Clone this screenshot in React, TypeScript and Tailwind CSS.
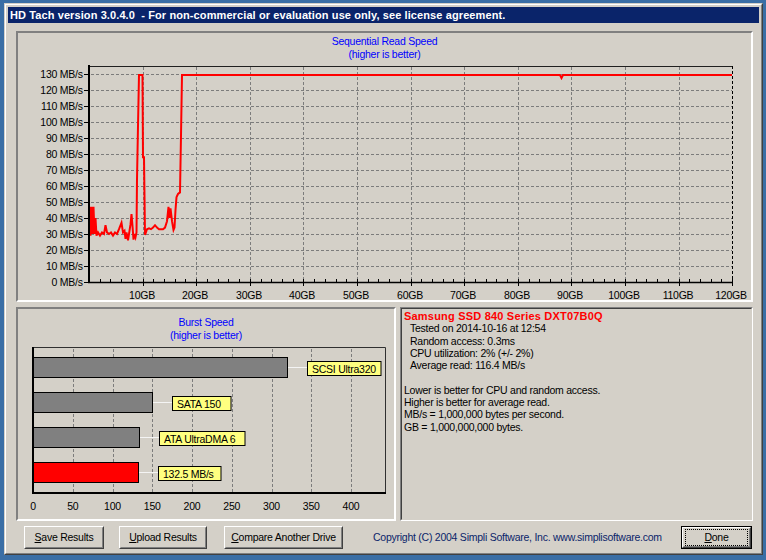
import React from "react";

const SVGFONT = '"Liberation Sans", Arial, sans-serif';

const redPts: [number, number][] = [
  [89.5, 47], [90.5, 29], [91.5, 47], [92.5, 30], [93.5, 47], [94.5, 30], [95.5, 40], [96.5, 29],
  [98, 31], [100, 29], [102, 31], [104, 30], [105.5, 35.5], [107, 31], [109, 30], [111, 31],
  [113, 29], [115, 31], [117, 30], [119, 33], [121.5, 37], [123, 31], [124.5, 32], [125.5, 27],
  [126.5, 31], [128, 26], [129, 30], [130.5, 36], [131.5, 42.5], [132.5, 35], [133.5, 26.5],
  [134.5, 30], [135.5, 28], [136.5, 31], [137, 64], [138, 97.5], [139, 129.4], [142.5, 129.4],
  [143, 78], [144, 78], [145, 29.5], [147, 33], [149, 33.5], [151, 33], [153, 34], [155, 35.5],
  [157, 34], [159, 33], [161, 33], [163, 33], [165, 34], [167, 38], [168.5, 47], [169.5, 40],
  [170.5, 46], [172, 38], [173.5, 32.5], [174.5, 34], [175.5, 45], [176.5, 53], [178, 55],
  [180, 56], [181, 91.7], [182, 129.4], [560, 129.4], [561.5, 127.5], [563, 129.4], [732, 129.4],
];

const GRID = "#7c7c7c";

function SeqChart() {
  const y0 = 282;
  const yv = (v: number) => y0 - v * 1.6;
  const x0 = 89;
  const gx = (k: number) => Math.round(x0 + 53.6 * k) + 0.5;
  const right = 732.5;
  const ys = Array.from({ length: 14 }, (_, i) => i);
  const xs = Array.from({ length: 12 }, (_, i) => i + 1);
  const minors = Array.from({ length: 60 }, (_, i) => i + 1).filter((i) => i % 5 !== 0);
  return (
    <svg width={733} height={239} viewBox="18 61 733 239" className="block">
      {ys.slice(1).map((k) => (
        <line key={"h" + k} x1={91} x2={732} y1={282.5 - 16 * k} y2={282.5 - 16 * k} stroke={GRID} strokeDasharray="3 2" />
      ))}
      {xs.slice(0, 11).map((k) => (
        <line key={"v" + k} x1={gx(k)} x2={gx(k)} y1={67} y2={281} stroke={GRID} strokeDasharray="3 2" />
      ))}
      <line x1={x0} x2={right} y1={66.5} y2={66.5} stroke="#202020" />
      <line x1={right} x2={right} y1={66} y2={282} stroke="#000" strokeDasharray="3 2" />
      {minors.map((m) => (
        <line key={"m" + m} x1={Math.round(x0 + 10.72 * m) + 0.5} x2={Math.round(x0 + 10.72 * m) + 0.5} y1={279} y2={282} stroke="#000" />
      ))}
      {xs.map((k) => (
        <line key={"t" + k} x1={gx(k)} x2={gx(k)} y1={279} y2={286} stroke="#000" />
      ))}
      {ys.map((k) => (
        <line key={"yt" + k} x1={84} x2={89} y1={282.5 - 16 * k} y2={282.5 - 16 * k} stroke="#000" />
      ))}
      <polyline
        points={redPts.map(([x, v]) => `${x},${yv(v)}`).join(" ")}
        fill="none"
        stroke="#ff0000"
        strokeWidth={2}
        strokeLinejoin="miter"
      />
      <line x1={89} x2={89} y1={65} y2={283} stroke="#000" strokeWidth={2} />
      <line x1={88} x2={733} y1={282.5} y2={282.5} stroke="#000" strokeWidth={1.5} />
      <g fontFamily={SVGFONT} fontSize={10.5} letterSpacing={-0.25} fill="#000">
        {ys.map((k) => (
          <text key={"yl" + k} x={82.7} y={286 - 16 * k} textAnchor="end">
            {k * 10} MB/s
          </text>
        ))}
        {xs.map((k) => (
          <text key={"xl" + k} x={gx(k) - 1.5} y={298.5} textAnchor="middle">
            {k * 10}GB
          </text>
        ))}
      </g>
    </svg>
  );
}

const bars = [
  { v: 320, top: 357, fill: "#808080", label: "SCSI Ultra320", w: 73.5 },
  { v: 150, top: 392, fill: "#808080", label: "SATA 150", w: 58.5 },
  { v: 133, top: 427, fill: "#808080", label: "ATA UltraDMA 6", w: 85.5 },
  { v: 132.5, top: 462, fill: "#ff0000", label: "132.5 MB/s", w: 62.5 },
];

function BurstChart() {
  const x0 = 33;
  const sx = (v: number) => x0 + v * 0.795;
  const ticks = [0, 50, 100, 150, 200, 250, 300, 350, 400];
  return (
    <svg width={376} height={177} viewBox="18 342 376 177" className="block">
      {ticks.slice(1).map((t) => (
        <line key={"g" + t} x1={Math.round(sx(t)) + 0.5} x2={Math.round(sx(t)) + 0.5} y1={349} y2={492} stroke={GRID} strokeDasharray="3 2" />
      ))}
      <line x1={33} x2={385.5} y1={347.5} y2={347.5} stroke="#303030" />
      <line x1={385.5} x2={385.5} y1={347.5} y2={493} stroke="#303030" />
      {bars.map((b) => {
        const end = Math.round(sx(b.v)) + 0.5;
        const lx = Math.round(end + 19) + 0.5;
        return (
          <g key={b.label}>
            <line x1={end} x2={lx} y1={b.top + 10.5} y2={b.top + 10.5} stroke="#f4f4f4" />
            <rect x={33} y={b.top + 0.5} width={end - 33} height={20} fill={b.fill} stroke="#000" />
            <rect x={lx} y={b.top + 4.5} width={b.w} height={14} fill="#ffff80" stroke="#000" />
            <text x={lx + 4.5} y={b.top + 15.5} fontFamily={SVGFONT} fontSize={10.5} letterSpacing={-0.25} fill="#000">
              {b.label}
            </text>
          </g>
        );
      })}
      <line x1={33} x2={33} y1={347} y2={494} stroke="#000" strokeWidth={2} />
      <line x1={32} x2={386} y1={493} y2={493} stroke="#000" strokeWidth={2} />
      <g fontFamily={SVGFONT} fontSize={10.5} letterSpacing={-0.25} fill="#000">
        {ticks.map((t) => (
          <text key={t} x={sx(t)} y={509.5} textAnchor="middle">
            {t}
          </text>
        ))}
      </g>
    </svg>
  );
}

function Btn({ label, u, w, def }: { label: string; u: string; w: string; def?: boolean }) {
  const rest = label.slice(1);
  const text = (
    <span>
      <span className="underline">{u}</span>
      {rest}
    </span>
  );
  return (
    <div className={`${w} h-[23px] text-black shrink-0 ${def ? "border border-black" : ""}`}>
      <div className="h-full w-full border border-t-white border-l-white border-r-[#404040] border-b-[#404040]">
        <div className="h-full w-full border border-t-[#d4d0c8] border-l-[#d4d0c8] border-r-[#808080] border-b-[#808080] flex items-center justify-center">
          {def ? (
            <div className="h-[17px] w-[63px] border border-dotted border-[#000] flex items-center justify-center">{text}</div>
          ) : (
            text
          )}
        </div>
      </div>
    </div>
  );
}

export default function App() {
  return (
    <div className="w-[766px] h-[560px] bg-[#3a6ea5] pt-[3px] pl-[4px] overflow-hidden font-['Liberation_Sans',Arial,sans-serif] text-[10.5px] tracking-[-0.25px]">
      <div className="w-[759px] h-[552px] border border-t-[#d4d0c8] border-l-[#d4d0c8] border-r-[#404040] border-b-[#404040]">
        <div className="h-full border border-t-white border-l-white border-r-[#808080] border-b-[#808080] bg-[#d4d0c8] p-[2px] flex flex-col">
          <div className="h-[16px] bg-[#0a246a] text-white font-bold text-[11px] tracking-[0.1px] pl-[2px] flex items-center whitespace-nowrap shrink-0">
            HD Tach version 3.0.4.0&nbsp;&nbsp;- For non-commercial or evaluation use only, see license agreement.
          </div>
          <div className="flex flex-col">
            <div className="ml-[8px] mt-[8px] w-[737px] h-[271px] border-2 border-t-[#808080] border-l-[#808080] border-r-white border-b-white flex flex-col">
              <div className="pt-[2px] h-[28px] text-center text-[#0000ff] leading-[13px]">
                <div>Sequential Read Speed</div>
                <div>(higher is better)</div>
              </div>
              <SeqChart />
            </div>
            <div className="ml-[8px] mt-[5px] h-[214px] flex">
              <div className="w-[380px] h-full border-2 border-t-[#808080] border-l-[#808080] border-r-white border-b-white flex flex-col">
                <div className="pt-[7px] h-[33px] text-center text-[#0000ff] leading-[13px]">
                  <div>Burst Speed</div>
                  <div>(higher is better)</div>
                </div>
                <BurstChart />
              </div>
              <div className="ml-[4px] w-[353px] h-full border border-t-[#808080] border-l-[#808080] border-r-white border-b-white">
                <div className="h-full border border-t-[#404040] border-l-[#404040] border-r-[#d4d0c8] border-b-[#d4d0c8] pt-[1px] pl-[2px] leading-[12.3px] text-black">
                  <div className="text-[#ff0000] font-bold text-[11px] tracking-[0.2px]">Samsung SSD 840 Series DXT07B0Q</div>
                  <div className="pl-[6px]">Tested on 2014-10-16 at 12:54</div>
                  <div className="pl-[6px]">Random access: 0.3ms</div>
                  <div className="pl-[6px]">CPU utilization: 2% (+/- 2%)</div>
                  <div className="pl-[6px]">Average read: 116.4 MB/s</div>
                  <div className="h-[12.3px]"></div>
                  <div>Lower is better for CPU and random access.</div>
                  <div>Higher is better for average read.</div>
                  <div>MB/s = 1,000,000 bytes per second.</div>
                  <div>GB = 1,000,000,000 bytes.</div>
                </div>
              </div>
            </div>
            <div className="mt-[5px] h-[23px] flex items-center">
              <div className="ml-[16px]">
                <Btn label="Save Results" u="S" w="w-[80px]" />
              </div>
              <div className="ml-[15px]">
                <Btn label="Upload Results" u="U" w="w-[88px]" />
              </div>
              <div className="ml-[17px]">
                <Btn label="Compare Another Drive" u="C" w="w-[119px]" />
              </div>
              <div className="ml-[30px] w-[288px] whitespace-nowrap text-[#0a246a]">
                Copyright (C) 2004 Simpli Software, Inc. www.simplisoftware.com
              </div>
              <div className="ml-[20px]">
                <Btn label="Done" u="D" w="w-[71px]" def />
              </div>
            </div>
          </div>
        </div>
      </div>
    </div>
  );
}
